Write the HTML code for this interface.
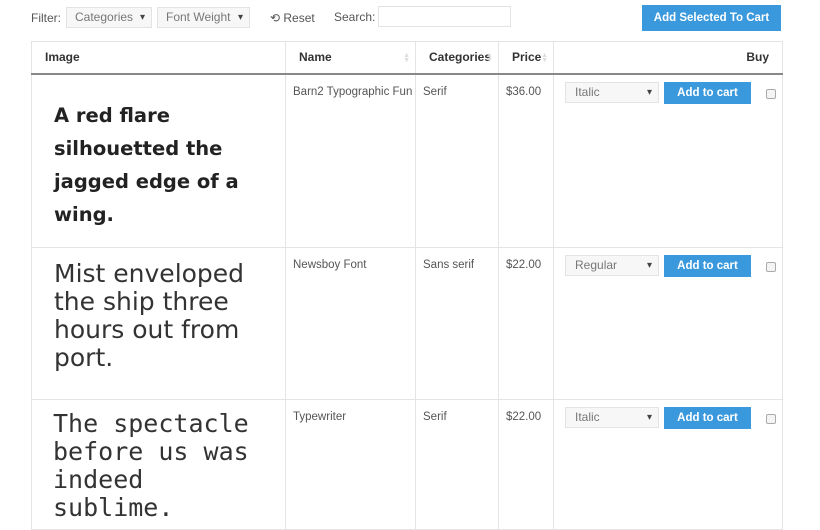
<!DOCTYPE html>
<html><head><meta charset="utf-8"><style>
*{box-sizing:border-box;margin:0;padding:0}
body{width:820px;height:523px;overflow:hidden;background:#fff;font-family:"Liberation Sans",sans-serif;color:#555;font-size:12px;position:relative}
.abs{position:absolute}
.sel{position:absolute;top:7px;height:21px;background:#f7f7f7;border:1px solid #e3e3e3;color:#777;font-size:12px;line-height:19px;padding-left:8px}
.sel:after{content:"▾";position:absolute;right:6px;top:0;font-size:10px;color:#444}
table{position:absolute;left:31px;top:41px;border-collapse:collapse;width:752px}
td,th{border:1px solid #e4e4e4;vertical-align:top;text-align:left}
th{height:32px;font-weight:bold;color:#333;font-size:12px;vertical-align:middle;padding-left:13px;border-bottom:2px solid #888;position:relative}
th .s{position:absolute;right:5px;top:11px;color:#ddd;font-size:7px;line-height:5px}
td{font-size:11.5px;padding:11px 0 0 7px;color:#555}
.btn{position:absolute;background:#3a98dc;color:#fff;font-weight:bold;font-size:11.5px;text-align:center}
.vs{position:absolute;left:11px;width:94px;height:21px;background:#f7f7f7;border:1px solid #e3e3e3;color:#777;font-size:12px;line-height:19px;padding-left:9px}
.vs:after{content:"▾";position:absolute;right:6px;top:0;font-size:10px;color:#444}
.cb{position:absolute;left:212px;width:10px;height:10px;border:1px solid #aaa;border-radius:2px;background:#f4f4f4}
.img{position:absolute;color:#222}
</style></head><body>
<div class="abs" style="left:31px;top:11px;color:#555">Filter:</div>
<div class="sel" style="left:66px;width:86px">Categories</div>
<div class="sel" style="left:157px;width:93px">Font Weight</div>
<div class="abs" style="left:270px;top:11px;color:#555">⟲ Reset</div>
<div class="abs" style="left:334px;top:10px;color:#555">Search:</div>
<div class="abs" style="left:378px;top:6px;width:133px;height:21px;border:1px solid #e3e3e3"></div>
<div class="btn" style="left:642px;top:5px;width:139px;height:26px;line-height:26px">Add Selected To Cart</div>
<table>
<tr><th style="width:254px">Image</th><th style="width:130px">Name<span class="s">▲<br>▼</span></th><th style="width:83px">Categories<span class="s">▲<br>▼</span></th><th style="width:55px">Price<span class="s">▲<br>▼</span></th><th style="text-align:right;padding-right:13px">Buy</th></tr>
<tr style="height:174px"><td></td><td>Barn2 Typographic Fun</td><td>Serif</td><td>$36.00</td><td style="position:relative"><div class="vs" style="top:7px">Italic</div><div class="btn" style="left:110px;top:7px;width:87px;height:22px;line-height:22px">Add to cart</div><div class="cb" style="top:14px"></div></td></tr>
<tr style="height:152px"><td></td><td>Newsboy Font</td><td>Sans serif</td><td>$22.00</td><td style="position:relative"><div class="vs" style="top:7px">Regular</div><div class="btn" style="left:110px;top:7px;width:87px;height:22px;line-height:22px">Add to cart</div><div class="cb" style="top:14px"></div></td></tr>
<tr style="height:130px"><td></td><td>Typewriter</td><td>Serif</td><td>$22.00</td><td style="position:relative"><div class="vs" style="top:7px">Italic</div><div class="btn" style="left:110px;top:7px;width:87px;height:22px;line-height:22px">Add to cart</div><div class="cb" style="top:14px"></div></td></tr>
</table>
<div class="img" style="left:54px;top:99px;font-family:'DejaVu Sans',sans-serif;font-size:19.5px;line-height:33px;font-weight:bold;color:#222">A red flare<br>silhouetted the<br>jagged edge of a<br>wing.</div>
<div class="img" style="left:54px;top:260px;font-family:'DejaVu Sans',sans-serif;font-size:25px;line-height:28px;color:#333">Mist enveloped<br>the ship three<br>hours out from<br>port.</div>
<div class="img" style="left:53px;top:410px;font-family:'DejaVu Sans Mono',monospace;font-size:25px;line-height:28px;color:#333">The spectacle<br>before us was<br>indeed<br>sublime.</div>
</body></html>
